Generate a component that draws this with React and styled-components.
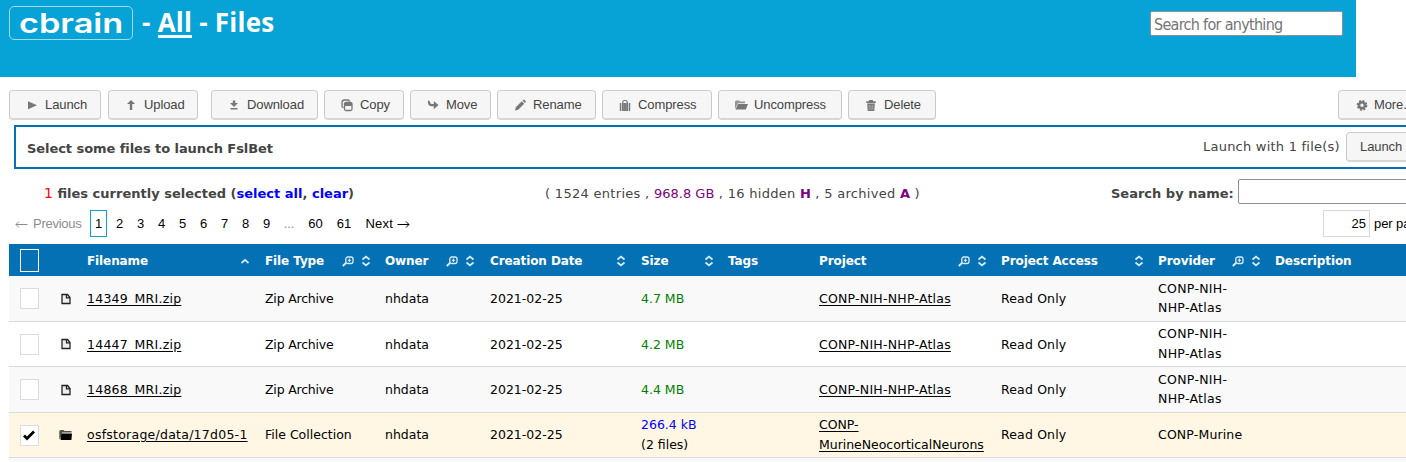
import React from "react";
import styled, { createGlobalStyle } from "styled-components";

const verdana = `Verdana, "DejaVu Sans", sans-serif`;
const arial = `"Liberation Sans", Arial, sans-serif`;

const Global = createGlobalStyle`
  *, *::before, *::after { box-sizing: border-box; }
  html, body { margin: 0; background: #fff; overflow: hidden; }
  body { font: 12px ${verdana}; color: #444; height: 462px; }
`;

const Page = styled.div`
  width: 1406px;
  height: 462px;
  overflow: hidden;
`;

/* ---------- header ---------- */
const Header = styled.header`
  display: flex;
  align-items: flex-start;
  width: 1356px;
  height: 77px;
  padding: 6px 13px 0 9px;
  background: #07a3d7;
`;
const Logo = styled.div`
  display: flex;
  align-items: center;
  width: 124px;
  height: 34px;
  padding: 2px 0 0 9px;
  border: 1px solid #9bdcf2;
  border-radius: 5px;
  color: #fff;
`;
const LogoText = styled.span`
  font: 600 27px/30px Inter, sans-serif;
  transform: scaleX(1.27);
  transform-origin: 0 50%;
`;
const Title = styled.h1`
  margin: 0 0 0 9px;
  color: #fff;
  font: 700 26px/33px "Open Sans", sans-serif;
  letter-spacing: 0.25px;
  white-space: nowrap;
`;
const TitleLink = styled.span`
  display: inline-block;
  height: 32px;
  border-bottom: 3px solid #fff;
  line-height: 33px;
`;
const GlobalSearch = styled.input`
  width: 193px;
  height: 25px;
  margin: 5px 0 0 auto;
  padding: 2px 3px 0;
  border: 1px solid #8f8f9d;
  border-radius: 2px;
  background: #fff;
  font: 16px "DejaVu Sans Condensed", "DejaVu Sans", sans-serif;
  font-stretch: condensed;
  letter-spacing: -0.7px;
  &::placeholder { color: #757575; opacity: 1; }
`;

/* ---------- toolbar ---------- */
const Toolbar = styled.nav`
  display: flex;
  padding: 13px 0 0 9px;
  height: 48px;
`;
const Btn = styled.button`
  display: flex;
  flex: none;
  align-items: center;
  width: ${(p) => p.$w}px;
  height: 30px;
  margin: 0 ${(p) => p.$mr ?? 6}px 0 0;
  padding: 0 0 0 ${(p) => p.$pl ?? 14}px;
  gap: 5px;
  border: 1px solid #c9c9c9;
  border-width: 1px 1px 2px;
  border-color: #cfcfcf #c9c9c9 #d6d6d6;
  border-radius: 4px;
  background: #f6f6f6;
  color: #444;
  font: 13px/16px ${arial};
  letter-spacing: -0.1px;
  white-space: nowrap;
`;
const Grow = styled.div`flex: 1;`;
const Glyph = styled.svg`
  flex: none;
  display: block;
  width: ${(p) => p.$s ?? 16}px;
  height: ${(p) => p.$s ?? 16}px;
`;

const icons = {
  play: <path d="M4 4.200v8l9-4z" fill="#777" />,
  up: <path d="M8 3l4 4H9.200v6H6.800V7H4z" fill="#777" />,
  down: <path d="M6.800 3.500h2.400V6h2.800L8 10 4 6h2.800zM4.500 11h7v1.600h-7z" fill="#777" />,
  copy: (
    <g>
      <path d="M4.500 10.500C3.500 10.500 3 10 3 9V5.500C3 4 4 3 5.500 3H9c1 0 1.500.5 1.500 1.500" fill="none" stroke="#777" strokeWidth="1.300" />
      <rect x="5.500" y="5.500" width="7.500" height="8" rx="1.500" fill="#f6f6f6" stroke="#777" strokeWidth="1.300" />
      <path d="M5.500 6h7.500v3H5.500z" fill="#777" />
    </g>
  ),
  move: <path d="M3 3.500v2c0 2.500 1.500 3.700 4 3.700h1.800v3L13.500 8 8.800 4v3H7C5.500 7 5.200 6.300 5 5 4.800 4 4 3.500 3 3.500z" fill="#777" />,
  pencil: <path d="M3 13.500l.8-3.200 6-6 2.400 2.400-6 6zM10.500 3.600L12 2.500 14 4.500l-1.100 1.500z" fill="#777" />,
  suitcase: (
    <g fill="#777">
      <path d="M2.800 6H4.300v8H2.800zM5 6h6v8H5zM11.700 6h1.500v8h-1.500z" />
      <path d="M5.800 6V4.700Q6 3.500 7.200 3.500h1.600Q10 3.500 10.200 4.700V6" fill="none" stroke="#777" strokeWidth="1.200" />
      <path d="M6.800 6v8M9.200 6v8" stroke="#aaa" strokeWidth=".5" />
    </g>
  ),
  folder: (
    <g fill="#777">
      <path d="M2 12V4.500l1-1h3l1 1h5v1.800H5z" opacity=".75" />
      <path d="M5 7h10l-2.200 5.500H2.500z" />
    </g>
  ),
  trash: (
    <g fill="#777">
      <path d="M3.300 4.300h9.400V6H3.300zM6 3h4v1.500H6z" />
      <path d="M4.200 6.600h7.600L11.300 14H4.700z" />
      <path d="M6.300 8v5M8 8v5M9.700 8v5" stroke="#c4c4c4" strokeWidth=".6" />
    </g>
  ),
  gear: (
    <g stroke="#777" fill="none">
      <circle cx="9" cy="8.300" r="3" strokeWidth="2.600" />
      <circle cx="9" cy="8.300" r="4.500" strokeWidth="1.800" strokeDasharray="1.900 1.630" />
    </g>
  ),
};
const Icon = ({ name }) => <Glyph viewBox="0 0 16 16">{icons[name]}</Glyph>;

/* ---------- launch bar ---------- */
const LaunchBar = styled.section`
  display: flex;
  align-items: center;
  width: 1420px;
  height: 44px;
  margin-left: 14px;
  padding-left: 11px;
  border: 2px solid #0471b4;
`;
const Txt = styled.span`
  flex: none;
  white-space: nowrap;
  font-weight: ${(p) => (p.$b ? 700 : 400)};
  font-size: ${(p) => p.$fs ?? 13}px;
  letter-spacing: ${(p) => p.$ls ?? 0}px;
  color: ${(p) => p.$c ?? "inherit"};
`;
const LaunchTitle = styled(Txt)`
  padding-top: 2px;
`;
const LaunchCount = styled(Txt)`
  padding-bottom: 2px;
`;
const LaunchAside = styled.div`
  display: flex;
  align-items: center;
  margin: 0 0 0 auto;
  width: 229px;
  height: 40px;
  justify-content: space-between;
`;

/* ---------- status line ---------- */
const Status = styled.div`
  display: flex;
  align-items: center;
  height: 38px;
  padding: 11px 0 0 44px;
  line-height: 16px;
`;
const StatusPart = styled.div`
  flex: none;
  width: ${(p) => p.$w}px;
  white-space: nowrap;
`;
const NameSearch = styled.input`
  flex: none;
  width: 200px;
  height: 25px;
  border: 1px solid #8f8f9d;
  border-radius: 2px;
  margin: -4px 0 0;
`;

/* ---------- pagination ---------- */
const Pager = styled.div`
  display: flex;
  align-items: center;
  height: 37px;
  padding: 3px 0 7px 14px;
  font: 13px/16px ${arial};
  color: #000;
`;
const PageCell = styled.span`
  display: flex;
  flex: none;
  align-items: center;
  justify-content: ${(p) => p.$j ?? "center"};
  width: ${(p) => p.$w ?? 21}px;
  height: 27px;
  white-space: nowrap;
  letter-spacing: ${(p) => p.$ls ?? -0.1}px;
  color: ${(p) => (p.$off ? "#8c8c8c" : "#000")};
`;
const CurrentPage = styled(PageCell)`
  width: 17px;
  margin: 0 2px 0 0;
  border: 1px solid #07a3d7;
`;
const PerPage = styled.span`
  flex: none;
  width: 47px;
  height: 27px;
  margin-right: 4px;
  padding-right: 3px;
  border: 1px solid #d9d9d9;
  line-height: 25px;
  text-align: right;
`;
const Arrow = styled.svg`
  width: 13px;
  height: 9px;
  margin: ${(p) => p.$m};
`;

/* ---------- table ---------- */
const Table = styled.div`
  width: 1500px;
  margin-left: 9px;
  color: #000;
`;
const Row = styled.div`
  display: grid;
  grid-template-columns: 50px 28px 178px 120px 105px 151px 87px 91px 182px 157px 117px 1fr;
  align-items: center;
  height: ${(p) => p.$h}px;
  border-bottom: 1px solid #dcdcdc;
  background: ${(p) => p.$bg};
  font-size: 12.5px;
  line-height: 19.5px;
`;
const HeadRow = styled(Row)`
  border: 0;
  color: #fff;
  font-size: 12px;
  font-weight: 700;
`;
const Cell = styled.div`
  display: flex;
  align-items: center;
  padding-top: ${(p) => (p.$flush ? 0 : 1)}px;
  padding-bottom: ${(p) => (p.$flush ? 1 : 0)}px;
  white-space: nowrap;
  letter-spacing: ${(p) => p.$ls ?? 0}px;
`;
const HeadLabel = styled.span`
  padding-top: 2px;
  letter-spacing: -0.1px;
`;
const Link = styled.span`
  color: #000;
  text-decoration: underline;
  text-underline-offset: 2px;
`;
const Size = styled.span`color: ${(p) => p.$c};`;
const Tools = styled.span`
  display: flex;
  gap: 6px;
  margin: 0 ${(p) => p.$mr}px 0 auto;
`;
const Check = styled.span`
  display: flex;
  align-items: center;
  justify-content: center;
  width: 19px;
  height: ${(p) => (p.$head ? 23 : 21)}px;
  margin-left: 11px;
  padding-right: 2px;
  border: 1px solid ${(p) => (p.$head ? "#fff" : "#dcdcdc")};
  background: ${(p) => (p.$head ? "transparent" : "#fff")};
`;

const Sort = ({ up }) => (
  <Glyph viewBox="0 0 12 12" $s={12} fill="none" stroke="#dcebf6" strokeWidth="1.700">
    <path d={up ? "M2.500 8L6 4.800 9.500 8" : "M2.500 4.500L6 1.500 9.500 4.500M2.500 7.500L6 10.500 9.500 7.500"} />
  </Glyph>
);
const Zoom = () => (
  <Glyph viewBox="0 0 12 12" $s={12} fill="none" stroke="#dcebf6">
    <rect x="3.800" y="2" width="7.200" height="6.500" rx="2" strokeWidth="1.300" />
    <path d="M4.300 7.800L.8 11" strokeWidth="2" />
    <path d="M7.400 3.500v3.400M5.700 5.200h3.400" strokeWidth="1.100" />
  </Glyph>
);
const FileIcon = () => (
  <Glyph viewBox="0 0 14 14" $s={14}>
    <path d="M3 2.500h5.500l2.500 3v6H3z" fill="#eee" stroke="#222" strokeWidth="1.300" />
    <path d="M7.500 2.500v3.300h3.500" fill="none" stroke="#222" strokeWidth="1.300" />
  </Glyph>
);
const FolderIcon = () => (
  <Glyph viewBox="0 0 14 14" $s={14}>
    <path d="M.3 11V3l1-1h3.200l1 1h7v1.500H3L1.300 11z" fill="#55514a" />
    <path d="M2.300 5.500H13l-.6 6.500H1.600z" fill="#000" />
  </Glyph>
);

const columns = [
  { label: "Filename", sort: "up", mr: 14 },
  { label: "File Type", zoom: true, sort: "both", mr: 13 },
  { label: "Owner", zoom: true, sort: "both", mr: 14 },
  { label: "Creation Date", sort: "both", mr: 14 },
  { label: "Size", sort: "both", mr: 13 },
  { label: "Tags" },
  { label: "Project", zoom: true, sort: "both", mr: 13 },
  { label: "Project Access", sort: "both", mr: 13 },
  { label: "Provider", zoom: true, sort: "both", mr: 13 },
  { label: "Description" },
];

const zip = (name, size, h, bg) => ({
  name, size, h, bg, type: "Zip Archive", typeLs: -0.2, color: "#008000",
  project: ["CONP-NIH-NHP-Atlas"], projectLs: 0.23, provider: ["CONP-NIH-", "NHP-Atlas"],
});
const rows = [
  zip("14349_MRI.zip", "4.7 MB", 46, "#f9f9f9"),
  zip("14447_MRI.zip", "4.2 MB", 45, "#fff"),
  zip("14868_MRI.zip", "4.4 MB", 46, "#f9f9f9"),
  {
    name: "osfstorage/data/17d05-1", size: "266.4 kB", files: "(2 files)", h: 45, bg: "#fff6e4",
    type: "File Collection", typeLs: 0, color: "#0000ff", checked: true,
    project: ["CONP-", "MurineNeocorticalNeurons"], projectLs: -0.03, provider: ["CONP-Murine"],
  },
];
const lines = (list) => list.map((t, i) => <React.Fragment key={t}>{i > 0 && <br />}{t}</React.Fragment>);

const tools = [
  ["Launch", "play", 92, 7], ["Upload", "up", 90, 13], ["Download", "down", 107, 6],
  ["Copy", "copy", 80, 6], ["Move", "move", 81, 6], ["Rename", "pencil", 99, 6],
  ["Compress", "suitcase", 110, 6], ["Uncompress", "folder", 124, 6], ["Delete", "trash", 88, 0],
];

export default function App() {
  return (
    <Page>
      <Global />
      <Header>
        <Logo><LogoText>cbrain</LogoText></Logo>
        <Title>- <TitleLink>All</TitleLink> - Files</Title>
        <GlobalSearch placeholder="Search for anything" />
      </Header>

      <Toolbar>
        {tools.map(([label, icon, w, mr]) => (
          <Btn key={label} $w={w} $mr={mr}><Icon name={icon} />{label}</Btn>
        ))}
        <Grow />
        <Btn $w={101} $mr={-33}><Icon name="gear" />More...</Btn>
      </Toolbar>

      <LaunchBar>
        <LaunchTitle $b $ls={-0.06}>Select some files to launch FslBet</LaunchTitle>
        <LaunchAside>
          <LaunchCount $ls={0.23}>Launch with 1 file(s)</LaunchCount>
          <Btn $w={86} $mr={0} $pl={13}>Launch</Btn>
        </LaunchAside>
      </LaunchBar>

      <Status>
        <StatusPart $w={501}>
          <Txt $c="#f00" $fs={14}>1</Txt><Txt $b> files currently selected (<Txt $b $c="#00f">select all</Txt>, <Txt $b $c="#00f">clear</Txt>)</Txt>
        </StatusPart>
        <StatusPart $w={566}>
          <Txt $ls={0.3}>( 1524 entries , <Txt $c="#800080">968.8 GB</Txt> , 16 hidden <Txt $b $c="#800080">H</Txt> , 5 archived <Txt $b $c="#800080">A</Txt> )</Txt>
        </StatusPart>
        <StatusPart $w={127}><Txt $b>Search by name:</Txt></StatusPart>
        <NameSearch />
      </Status>

      <Pager>
        <PageCell $w={76} $j="flex-start" $ls={-0.25} $off>
          <Arrow $m="1px 5px 0 1px" viewBox="0 0 13 9" fill="none" stroke="#8c8c8c"><path d="M12.500 4.500H1M4 1.500l-3 3 3 3" /></Arrow>
          Previous
        </PageCell>
        <CurrentPage>1</CurrentPage>
        {[2, 3, 4, 5, 6, 7, 8, 9].map((n) => <PageCell key={n}>{n}</PageCell>)}
        <PageCell $w={24} $off>...</PageCell>
        <PageCell $w={29}>60</PageCell>
        <PageCell $w={28}>61</PageCell>
        <PageCell $w={52} $j="flex-end" $ls={0.2}>
          Next
          <Arrow $m="1px 0 0 4px" viewBox="0 0 13 9" fill="none" stroke="#000"><path d="M.5 4.500H12M9 1.500l3 3-3 3" /></Arrow>
        </PageCell>
        <Grow />
        <PerPage>25</PerPage>
        <PageCell $w={32} $j="flex-start">per page</PageCell>
      </Pager>

      <Table>
        <HeadRow $h={32} $bg="#0471b4">
          <Check $head />
          <span />
          {columns.map((c) => (
            <Cell key={c.label}>
              <HeadLabel>{c.label}</HeadLabel>
              {c.sort && <Tools $mr={c.mr}>{c.zoom && <Zoom />}<Sort up={c.sort === "up"} /></Tools>}
            </Cell>
          ))}
        </HeadRow>
        {rows.map((r) => (
          <Row key={r.name} $h={r.h} $bg={r.bg}>
            <Check>
              {r.checked && (
                <Glyph viewBox="0 0 14 14" $s={14}><path d="M2 7.500l3 3L12 3.500" fill="none" stroke="#000" strokeWidth="2.800" /></Glyph>
              )}
            </Check>
            {r.checked ? <FolderIcon /> : <FileIcon />}
            <Cell $flush={r.checked} $ls={0.25}><Link>{r.name}</Link></Cell>
            <Cell $flush={r.checked} $ls={r.typeLs}>{r.type}</Cell>
            <Cell $flush={r.checked}>nhdata</Cell>
            <Cell $flush={r.checked}>2021-02-25</Cell>
            <Cell $flush={r.checked}><div><Size $c={r.color}>{r.size}</Size>{r.files && <><br />{r.files}</>}</div></Cell>
            <span />
            <Cell $flush={r.checked} $ls={r.projectLs}><Link>{lines(r.project)}</Link></Cell>
            <Cell $flush={r.checked} $ls={0.15}>Read Only</Cell>
            <Cell $flush $ls={r.checked ? 0.15 : 0.3}><div>{lines(r.provider)}</div></Cell>
            <span />
          </Row>
        ))}
        <Row $h={46} $bg="#f9f9f9" />
      </Table>
    </Page>
  );
}
